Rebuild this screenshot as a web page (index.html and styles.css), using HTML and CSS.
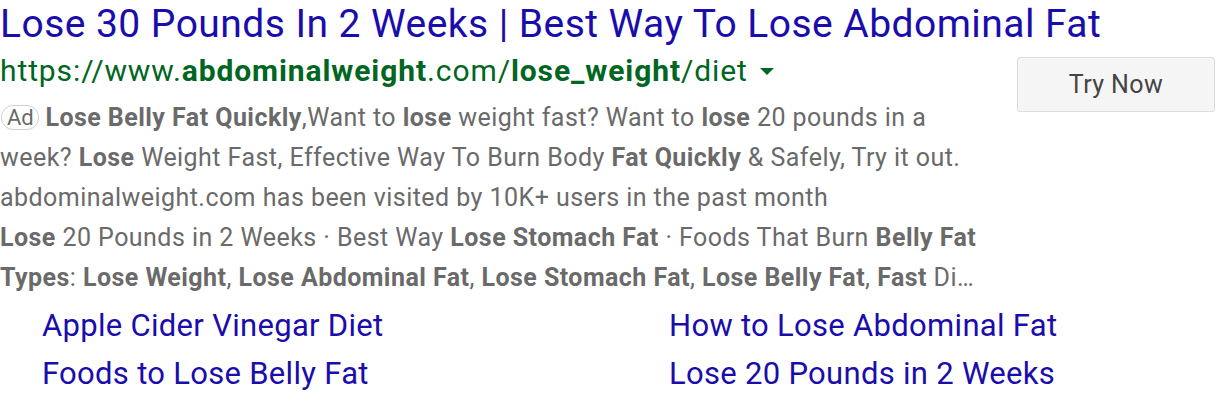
FILE: index.html
```html
<!DOCTYPE html>
<html>
<head>
<meta charset="utf-8">
<link rel="stylesheet" href="styles.css">
</head>
<body>
<div class="ad">
  <div class="top">
    <div class="main">
      <div class="title">Lose 30 Pounds In 2 Weeks | Best Way To Lose Abdominal Fat</div>
      <div class="url">https://www.<b>abdominalweight</b>.com/<b>lose_weight</b>/diet<span class="caret"></span></div>
      <div class="desc">
        <div class="line"><span class="badge">Ad</span> <b>Lose Belly Fat Quickly</b>,Want to <b>lose</b> weight fast? Want to <b>lose</b> 20 pounds in a</div>
        <div class="line">week? <b>Lose</b> Weight Fast, Effective Way To Burn Body <b>Fat Quickly</b> &amp; Safely, Try it out.</div>
        <div class="line">abdominalweight.com has been visited by 10K+ users in the past month</div>
        <div class="line"><b>Lose</b> 20 Pounds in 2 Weeks · Best Way <b>Lose Stomach Fat</b> · Foods That Burn <b>Belly Fat</b></div>
        <div class="line"><b>Types</b>: <b>Lose Weight</b>, <b>Lose Abdominal Fat</b>, <b>Lose Stomach Fat</b>, <b>Lose Belly Fat</b>, <b>Fast</b> Di…</div>
      </div>
    </div>
    <div class="btn">Try Now</div>
  </div>
  <div class="sitelinks">
    <a>Apple Cider Vinegar Diet</a>
    <a>How to Lose Abdominal Fat</a>
    <a>Foods to Lose Belly Fat</a>
    <a>Lose 20 Pounds in 2 Weeks</a>
  </div>
</div>
</body>
</html>
```
FILE: styles.css
```css
html, body { margin: 0; padding: 0; background: #fff; }
body { font-family: Roboto, "Noto Sans", Arial, sans-serif; }
.ad { width: 1216px; padding-top: 1px; }
.top { display: flex; justify-content: space-between; }
.main { flex: 1; min-width: 0; }
.title { font-size: 39px; line-height: 46px; letter-spacing: 0.45px; color: #1a0dab; white-space: nowrap; }
.url { font-size: 30px; line-height: 36px; letter-spacing: 0.9px; color: #006621; white-space: nowrap; margin-top: 6px; }
.url b { font-weight: 700; }
.caret { display: inline-block; width: 0; height: 0; border-left: 7px solid transparent; border-right: 7px solid transparent; border-top: 7px solid #006621; margin-left: 12px; vertical-align: middle; position: relative; top: -2px; }
.desc { font-size: 25px; line-height: 40px; letter-spacing: 0.45px; color: #6a6a6a; margin-top: 9px; }
.desc b { font-weight: 700; }
.line { white-space: nowrap; }
.badge { display: inline-block; font-size: 22px; line-height: 23px; letter-spacing: 0; padding: 0 4px 0 5px; margin-left: 1px; border: 1px solid #cfcfcf; border-radius: 12px; color: #6a6a6a; vertical-align: 1px; }
.btn { flex-shrink: 0; margin-top: 56px; margin-right: 1px; width: 196px; height: 53px; border: 1px solid #dcdcdc; border-radius: 3px; background: #f5f5f5; color: #444; font-size: 25px; letter-spacing: 0.4px; display: flex; align-items: center; justify-content: center; align-self: flex-start; }
.sitelinks { display: grid; grid-template-columns: 627px auto; padding-left: 42px; margin-top: 4px; }
.sitelinks a { font-size: 31px; line-height: 48px; letter-spacing: 0.3px; color: #1a0dab; white-space: nowrap; }
```
